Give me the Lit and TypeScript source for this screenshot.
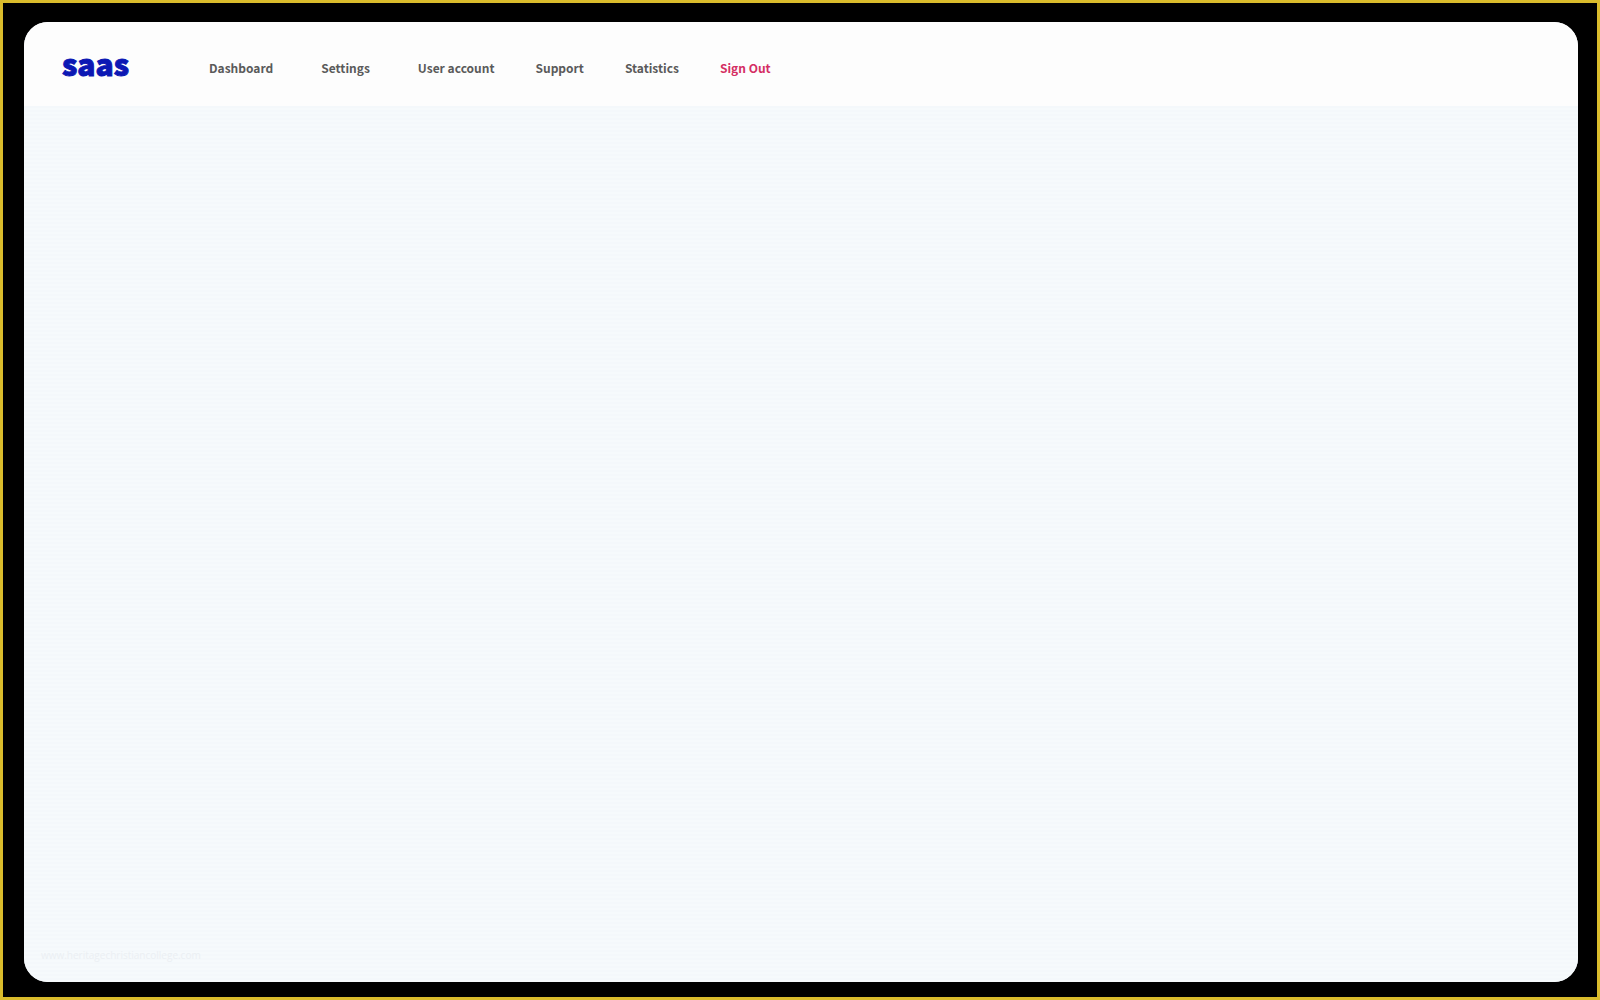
import { LitElement, html, css } from "lit";
import { customElement } from "lit/decorators.js";

@customElement("app-root")
export class AppRoot extends LitElement {
  static styles = css`
    :host {
      display: block;
      font-family: "Noto Sans CJK JP", "Noto Sans", sans-serif;
    }
    .frame {
      box-sizing: border-box;
      display: flex;
      min-height: 100vh;
      padding: 19px 19px 15px 21px;
      border: 3px solid #dabc2c;
      background: #000;
    }
    .panel {
      flex: 1;
      display: flex;
      flex-direction: column;
      overflow: hidden;
      border-radius: 24px;
      background: #f5f9fc;
    }
    .header {
      display: flex;
      align-items: center;
      gap: 80px;
      padding: 21px 38px 23px;
      background: #fdfdfd;
    }
    .brand {
      color: #0c18b4;
      font-size: 30px;
      font-weight: 900;
      line-height: 40px;
      text-decoration: none;
      -webkit-text-stroke: 1px #0c18b4;
    }
    .nav {
      display: flex;
      gap: 41px;
      padding-top: 10px;
    }
    .link {
      color: #5a5a5a;
      font-size: 12px;
      font-weight: 700;
      line-height: 20px;
      text-decoration: none;
    }
    .wide {
      margin-right: 7px;
    }
    .exit {
      color: #d42e63;
    }
    .content {
      flex: 1;
      display: flex;
      flex-direction: column;
      justify-content: flex-end;
      padding: 17px;
      background: repeating-linear-gradient(#f4f8fb 0 2px, #f6fafc 2px 4px);
    }
    .credit {
      margin: 0;
      color: #ebeff3;
      font-family: "Open Sans", sans-serif;
      font-size: 10px;
      line-height: 20px;
    }
  `;

  render() {
    return html`
      <div class="frame">
        <div class="panel">
          <header class="header">
            <a class="brand" href="#">saas</a>
            <nav class="nav" aria-label="Main">
              <a class="link wide" href="#dashboard">Dashboard</a>
              <a class="link wide" href="#settings">Settings</a>
              <a class="link" href="#account">User account</a>
              <a class="link" href="#support">Support</a>
              <a class="link" href="#statistics">Statistics</a>
              <a class="link exit" href="#sign-out">Sign Out</a>
            </nav>
          </header>
          <main class="content">
            <p class="credit">www.heritagechristiancollege.com</p>
          </main>
        </div>
      </div>
    `;
  }
}
